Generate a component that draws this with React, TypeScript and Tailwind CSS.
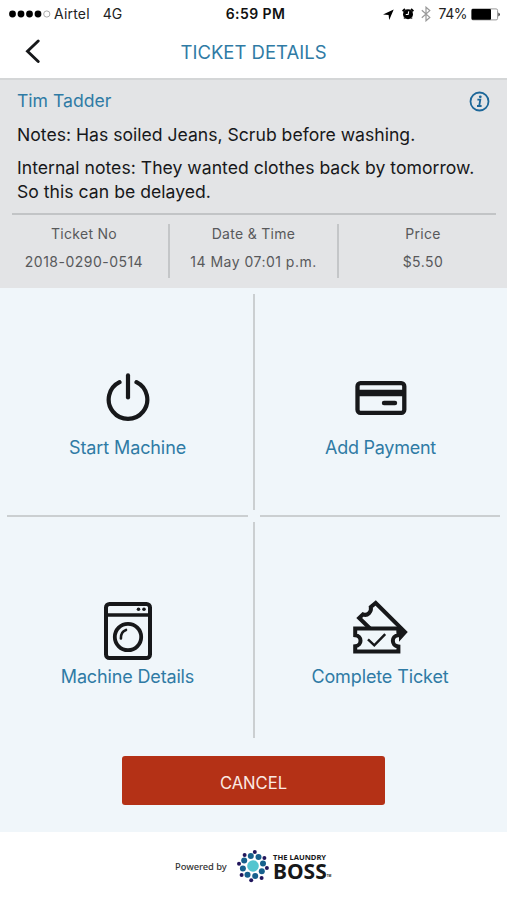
import React from 'react';

const INNER_DOTS = [
  [258.5, 857.1], [250.8, 856.1], [244.2, 860.6], [242.9, 868.4], [247.5, 874.8], [255.2, 875.9], [261.8, 871.3], [263, 863.4],
];
const OUTER_DOTS = [
  [254.8, 851.9], [244.6, 855], [239, 863.8], [241.6, 874.9], [251.2, 880.2], [261.6, 877.9], [266.9, 868.1], [264.4, 858],
];

function PowerIcon() {
  return (
    <svg width="44" height="48" viewBox="0 0 44 48" fill="none" stroke="#17181a" strokeWidth="4.2" strokeLinecap="round">
      <path d="M13.5 9.2A19.3 19.3 0 1 0 30.5 9.2" />
      <path d="M22 2.4V24.5" />
    </svg>
  );
}

function CardIcon() {
  return (
    <svg width="52" height="34" viewBox="0 0 52 34" fill="none" stroke="#17181a">
      <rect x="2.5" y="2.2" width="46.8" height="29.6" rx="3" strokeWidth="4.3" />
      <path d="M2 12H50" strokeWidth="6.4" />
      <path d="M29 22H40" strokeWidth="4.4" strokeLinecap="round" />
    </svg>
  );
}

function WasherIcon() {
  return (
    <svg width="48" height="58" viewBox="0 0 48 58" fill="none" stroke="#17181a">
      <rect x="2" y="2" width="44" height="54" rx="3.5" strokeWidth="4" />
      <path d="M2 13H46" strokeWidth="3.6" />
      <circle cx="24" cy="35" r="13.2" strokeWidth="3.8" />
      <path d="M16.9 36.5C16.7 32 18.8 29 22 27.9" strokeWidth="2.6" strokeLinecap="round" />
      <circle cx="34.5" cy="7.2" r="1.8" fill="#17181a" stroke="none" />
      <circle cx="40" cy="7.2" r="1.8" fill="#17181a" stroke="none" />
    </svg>
  );
}

function TicketsIcon() {
  return (
    <svg width="56" height="54" viewBox="0 0 56 54" fill="none" stroke="#17181a" strokeWidth="4">
      <path d="M17 28.5L6.2 18L10 14.4C14.5 16.2 18.8 12 17.8 7L22.7 3L52 32L48 36.5V32.5L44.8 29.5" />
      <path d="M2.2 28.6H45.4V35.2C38 35.6 38 46 45.4 46.5V51.6H2.2V46.2C9.3 45.5 9.3 35.7 2.2 35.2Z" />
      <path d="M15 39.3L21.3 45.3L32.2 34.2" strokeWidth="2.5" />
    </svg>
  );
}

function BubbleLogo() {
  return (
    <svg width="34" height="34" viewBox="236 849 34 34">
      <circle cx="253" cy="866" r="5.8" fill="#54c5cf" />
      {INNER_DOTS.map(([x, y]) => <circle key={`${x}-${y}`} cx={x} cy={y} r="3" fill="#17618d" />)}
      {OUTER_DOTS.map(([x, y]) => <circle key={`${x}-${y}`} cx={x} cy={y} r="2" fill="#21165c" />)}
    </svg>
  );
}

function StatusBar() {
  return (
    <div className="grid h-7 grid-cols-[1fr_auto_1fr] items-center pl-2 pr-1.5 text-[14px] leading-7 text-[#222]">
      <div className="flex items-center">
        <svg width="43" height="10" viewBox="0 0 43 10" className="mr-[3px]">
          <circle cx="4.5" cy="5" r="3.4" /><circle cx="13" cy="5" r="3.4" /><circle cx="21.5" cy="5" r="3.4" /><circle cx="30" cy="5" r="3.4" />
          <circle cx="38.8" cy="5" r="3.1" fill="none" stroke="#aaa" />
        </svg>
        <span className="tracking-[0.2px]">Airtel</span>
        <span className="ml-[13px]">4G</span>
      </div>
      <span className="pl-[2px] text-[14px] font-semibold tracking-[0.4px] text-[#111]">6:59 PM</span>
      <div className="flex items-center justify-end">
        <svg width="11" height="11" viewBox="0 0 11 11"><path d="M0 5.4L10.7.4L6.2 11L5.6 6Z" /></svg>
        <svg width="12" height="12" viewBox="0 0 12 12" className="ml-2">
          <circle cx="6" cy="6.3" r="5" /><path d="M.6 3.2L3 1M11.4 3.2L9 1M2.7 10L2.4 10.6M9.3 10L9.6 10.6" stroke="#000" strokeWidth="2" />
          <path d="M6.7 3.4L6.1 6.5H3.8" stroke="#fff" fill="none" strokeWidth="1.1" />
        </svg>
        <svg width="10" height="16" viewBox="0 0 10 16" className="ml-[7px]" fill="none" stroke="#999" strokeWidth="1.2"><path d="M.8 4.2L8.8 11.4L5 14.8V1.2L8.8 4.6L.8 11.8" /></svg>
        <span className="ml-2 tracking-[-0.5px]">74%</span>
        <svg width="30" height="13" viewBox="0 0 30 13" className="ml-1">
          <rect x=".6" y=".9" width="26" height="11" rx="1.5" fill="#fff" stroke="#999" />
          <rect x=".6" y="1" width="19.4" height="10.8" rx="1" />
          <path d="M27.5 4.5Q30 6.5 27.5 8.5Z" />
        </svg>
      </div>
    </div>
  );
}

function Action({ icon, label, iconClass = '', labelClass = '' }: { icon: React.ReactNode; label: string; iconClass?: string; labelClass?: string }) {
  return (
    <button className="flex h-full w-full flex-col items-center text-[18px] leading-6 text-[#2f7ba5]">
      <span className={`flex h-[148px] items-end justify-center ${iconClass}`}>{icon}</span>
      <span className={labelClass}>{label}</span>
    </button>
  );
}

function Fact({ label, value }: { label: string; value: string }) {
  return (
    <div className="flex h-[54px] flex-col items-center pt-px text-[14px] leading-[17px] tracking-[0.3px] text-[#58595b]">
      <span>{label}</span>
      <span className="mt-[11px] tracking-[0.48px]">{value}</span>
    </div>
  );
}

export default function App() {
  return (
    <main className="flex h-[900px] w-[507px] flex-col overflow-hidden bg-[#f0f6fa] font-['Inter',sans-serif]">
      <header className="h-[80px] shrink-0 border-b-2 border-[#d4d6d7] bg-white">
        <StatusBar />
        <div className="grid h-12 grid-cols-[1fr_auto_1fr] items-center">
          <button className="pl-[25px]" aria-label="Back">
            <svg width="16" height="26" viewBox="0 0 16 26" fill="none" stroke="#17181a" strokeWidth="2.9" strokeLinecap="round"><path d="M13.2 2L2.5 12.2L13.2 22.5" /></svg>
          </button>
          <h1 className="text-[18.5px] leading-6 text-[#2f7ba5]">TICKET DETAILS</h1>
        </div>
      </header>

      <section className="h-[208px] shrink-0 bg-[#e3e4e6] pt-[9px]">
        <div className="flex h-6 items-center justify-between pl-[17px] pr-[17px] text-[17.6px] text-[#2f7ba5]">
          <span className="pt-px">Tim Tadder</span>
          <svg width="21" height="21" viewBox="0 0 21 21" fill="none" stroke="#1d6799">
            <circle cx="10.5" cy="10.5" r="9" strokeWidth="1.8" />
            <path d="M8.4 8.6H11.3L10.2 15M8 15H12.6" strokeWidth="1.8" /><circle cx="11.3" cy="5.8" r="1.4" fill="#1d6799" stroke="none" />
          </svg>
        </div>
        <div className="pl-[17px] text-[17.6px] leading-6 text-[#17181a]">
          <p className="mt-[10px] whitespace-nowrap">Notes: Has soiled Jeans, Scrub before washing.</p>
          <p className="mt-[9px] whitespace-nowrap tracking-[0.02px]">Internal notes: They wanted clothes back by tomorrow.<br />So this can be delayed.</p>
        </div>
        <div className="ml-3 mr-[11px] mt-[9px] h-[2px] bg-[#c2c4c6]" />
        <div className="mt-[9px] grid grid-cols-[170px_169px_168px] divide-x-2 divide-[#c4c6c8]">
          <Fact label="Ticket No" value="2018-0290-0514" />
          <Fact label="Date & Time" value="14 May 07:01 p.m." />
          <Fact label="Price" value="$5.50" />
        </div>
      </section>

      <section className="grid shrink-0 grid-cols-[253px_2px_252px] grid-rows-[227px_2px_227px]">
        <Action icon={<PowerIcon />} label="Start Machine" iconClass="pb-[15px] pl-[3px]" labelClass="pl-[2px] tracking-[-0.1px]" />
        <div className="mb-[5px] mt-[6px] bg-[#cbcfd1]" />
        <Action icon={<CardIcon />} label="Add Payment" iconClass="pb-[21px]" labelClass="pr-px tracking-[-0.25px]" />
        <div className="ml-[7px] mr-[5px] bg-[#cbcfd1]" />
        <div />
        <div className="ml-[5px] mr-[7px] bg-[#cbcfd1]" />
        <Action icon={<WasherIcon />} label="Machine Details" iconClass="pb-[5px] pl-[3px]" labelClass="pl-[2px] tracking-[-0.15px]" />
        <div className="mb-[6px] mt-[5px] bg-[#cbcfd1]" />
        <Action icon={<TicketsIcon />} label="Complete Ticket" iconClass="pb-[11px] pr-px" labelClass="pr-[2px] tracking-[-0.12px]" />
      </section>

      <button className="ml-[122px] mt-3 h-[49px] w-[263px] shrink-0 rounded-[3px] bg-[#b43116] pt-[5px] text-[16.6px] text-[#fae9e3]">CANCEL</button>

      <footer className="mt-[27px] flex h-[68px] shrink-0 items-center bg-white pl-[175px]">
        <span className="w-[61px] whitespace-nowrap pt-[3px] font-['Noto_Sans',sans-serif] text-[9.4px] font-medium tracking-[-0.05px] text-[#333]">Powered by</span>
        <BubbleLogo />
        <div className="ml-[3px] font-['Noto_Sans',sans-serif] font-bold text-[#17181a]">
          <div className="whitespace-nowrap text-[7.6px] leading-[9px]">THE LAUNDRY</div>
          <div className="flex h-[18px] items-end text-[21px] leading-[18px]">BOSS<span className="text-[3px] leading-[7px]">TM</span></div>
        </div>
      </footer>
    </main>
  );
}
